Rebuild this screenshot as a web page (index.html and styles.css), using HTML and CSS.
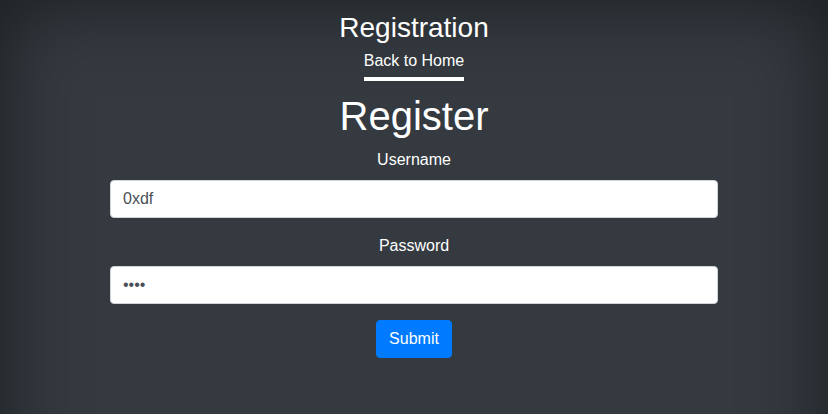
FILE: index.html
```html
<!DOCTYPE html>
<html lang="en">
<head>
<meta charset="utf-8">
<title>Registration</title>
<link rel="stylesheet" href="styles.css">
</head>
<body>
<div class="cover">
  <header class="masthead">
    <h3 class="brand">Registration</h3>
    <nav class="nav">
      <a class="nav-link active" href="#">Back to Home</a>
    </nav>
  </header>
  <main class="main">
    <h1 class="title">Register</h1>
    <form class="form">
      <div class="form-group">
        <label class="label" for="username">Username</label>
        <input class="input" id="username" type="text" value="0xdf">
      </div>
      <div class="form-group">
        <label class="label" for="password">Password</label>
        <input class="input" id="password" type="password" value="test">
      </div>
      <button class="btn" type="button">Submit</button>
    </form>
  </main>
</div>
</body>
</html>
```
FILE: styles.css
```css
body {
  margin: 0;
  min-height: 640px;
  background-color: #343a40;
  box-shadow: inset 0 0 5rem rgba(0, 0, 0, .5);
  color: #fff;
  font-family: "Liberation Sans", Arial, sans-serif;
  font-size: 16px;
  line-height: 1.5;
  text-align: center;
}
.cover {
  display: flex;
  flex-direction: column;
  align-items: center;
  padding-top: 11px;
}
.masthead {
  display: flex;
  flex-direction: column;
  align-items: center;
}
.brand {
  margin: 0;
  font-size: 28px;
  font-weight: 400;
  line-height: 1.2;
}
.nav {
  display: flex;
}
.nav-link {
  display: block;
  padding: 4px 0;
  color: #fff;
  text-decoration: none;
  border-bottom: 4px solid transparent;
  line-height: 24px;
}
.nav-link.active {
  border-bottom-color: #fff;
}
.main {
  margin-top: 11px;
  display: flex;
  flex-direction: column;
  align-items: center;
}
.title {
  margin: 0 0 8px;
  font-size: 40px;
  font-weight: 400;
  line-height: 1.2;
}
.form {
  width: 608px;
  display: flex;
  flex-direction: column;
  align-items: center;
}
.form-group {
  width: 100%;
  margin-bottom: 16px;
  display: flex;
  flex-direction: column;
  align-items: center;
}
.label {
  display: block;
  margin-bottom: 8px;
  line-height: 24px;
}
.input {
  box-sizing: border-box;
  display: block;
  width: 100%;
  height: 38px;
  padding: 6px 12px;
  font-family: "Liberation Sans", Arial, sans-serif;
  font-size: 16px;
  line-height: 1.5;
  color: #495057;
  background-color: #fff;
  border: 1px solid #ced4da;
  border-radius: 4px;
  outline: none;
}
.btn {
  box-sizing: border-box;
  display: inline-block;
  height: 38px;
  padding: 6px 12px;
  font-family: "Liberation Sans", Arial, sans-serif;
  font-size: 16px;
  line-height: 1.5;
  color: #fff;
  background-color: #007bff;
  border: 1px solid #007bff;
  border-radius: 4px;
  cursor: pointer;
}
```
